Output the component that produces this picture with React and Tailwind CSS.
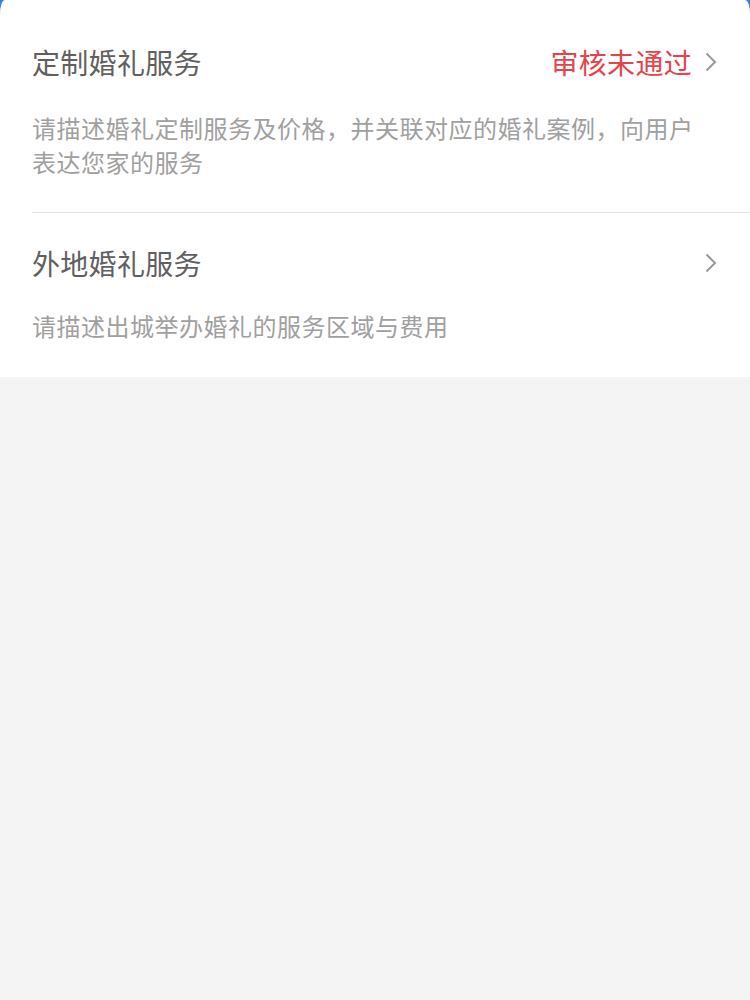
import React from "react";

const items = [
  {
    title: "定制婚礼服务",
    status: "审核未通过",
    desc: "请描述婚礼定制服务及价格，并关联对应的婚礼案例，向用户表达您家的服务",
  },
  {
    title: "外地婚礼服务",
    status: "",
    desc: "请描述出城举办婚礼的服务区域与费用",
  },
];

function Chevron() {
  return (
    <svg width="14" height="22" viewBox="0 0 14 22" className="ml-[12px] shrink-0">
      <path d="M2.5 2.5 L11 11 L2.5 19.5" fill="none" stroke="#9a9a9a" strokeWidth="2" />
    </svg>
  );
}

export default function App() {
  return (
    <div
      className="min-h-[1000px] bg-[#f4f4f4]"
      style={{ fontFamily: '"Noto Sans CJK SC", "Noto Sans", sans-serif' }}
    >
      <div className="bg-[#3a7cf5]">
        <div className="bg-white rounded-tl-[5px_14px] rounded-tr-[5px_14px] pt-[11px] pb-[1px]">
          {items.map((item, i) => (
            <div
              key={item.title}
              className={`ml-[32px] pr-[32px] ${i === 0 ? "pt-[31px] pb-[33px] border-b border-[#e2e2e2]" : "pt-[30px] pb-[33px]"}`}
            >
              <div className="flex items-center h-[40px]">
                <span className="flex-1 text-[28px] leading-[40px] tracking-[0.3px] text-[#606060]">{item.title}</span>
                {item.status && (
                  <span className="text-[28px] leading-[40px] tracking-[0.3px] text-[#e5434b]">{item.status}</span>
                )}
                <Chevron />
              </div>
              <p
                className={`${i === 0 ? "mt-[29px]" : "mt-[26px]"} pr-[20px] text-[24px] leading-[34px] tracking-[0.5px] text-[#a0a0a0]`}
              >
                {item.desc}
              </p>
            </div>
          ))}
        </div>
      </div>
    </div>
  );
}
